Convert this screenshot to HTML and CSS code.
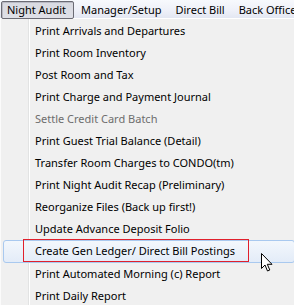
FILE: index.html
```html
<!DOCTYPE html>
<html lang="en">
<head>
    <meta charset="UTF-8">
    <title>Night Audit menu</title>
    <link rel="stylesheet" href="styles.css">
</head>
<body>
    <div class="menubar">
        <span class="menu-title open">Night Audit</span>
        <span class="menu-title">Manager/Setup</span>
        <span class="menu-title">Direct Bill</span>
        <span class="menu-title">Back Office</span>
    </div>

    <ul class="dropdown">
        <li class="item">Print Arrivals and Departures</li>
        <li class="item">Print Room Inventory</li>
        <li class="item">Post Room and Tax</li>
        <li class="item">Print Charge and Payment Journal</li>
        <li class="item disabled">Settle Credit Card Batch</li>
        <li class="item">Print Guest Trial Balance (Detail)</li>
        <li class="item">Transfer Room Charges to CONDO(tm)</li>
        <li class="item">Print Night Audit Recap (Preliminary)</li>
        <li class="item">Reorganize Files (Back up first!)</li>
        <li class="item">Update Advance Deposit Folio</li>
        <li class="item hover">
            Create Gen Ledger/ Direct Bill Postings
            <span class="callout"></span>
            <svg class="cursor" width="12" height="20" viewBox="0 0 12 20">
                <path d="M0.5 0.5 L0.5 15.5 L4 12 L6.5 18 L8.8 17 L6.3 11.3 L11 11.3 Z" fill="#fff" stroke="#000" stroke-width="1"/>
            </svg>
        </li>
        <li class="item">Print Automated Morning (c) Report</li>
        <li class="item">Print Daily Report</li>
    </ul>
</body>
</html>
```

FILE: styles.css
```css
html, body {
    margin: 0;
    padding: 0;
    overflow: hidden;
}
body {
    width: 294px;
    height: 305px;
    font-family: "Noto Sans", "Open Sans", sans-serif;
    font-size: 11px;
    color: #000;
    background: #f0f0f0;
}

.menubar {
    display: flex;
    height: 18px;
    padding-left: 1px;
    background: linear-gradient(to bottom, #f7f9fd 0%, #eef0f8 60%, #e3e7f2 100%);
}
.menu-title {
    height: 16px;
    line-height: 15px;
    margin-top: 1px;
    padding: 0 6px 0 6px;
    border: 1px solid transparent;
    border-radius: 2px;
    white-space: nowrap;
}
.menu-title.open {
    padding-left: 5px;
    padding-right: 7px;
    border-color: #6b6b74;
    background: linear-gradient(to bottom, #d8d9e0, #dfe0e7);
    box-shadow: inset 1px 1px 0 #b9bac4;
}

.dropdown {
    list-style: none;
    margin: 0;
    padding: 1px 0 0 0;
    width: 296px;
    border-top: 1px solid #fff;
    background:
        linear-gradient(to right, transparent 28px, #e2e3e3 28px, #e2e3e3 29px, #fff 29px, #fff 30px, transparent 30px),
        #f0f0f0;
    box-shadow: inset 1px 0 0 #fbfbfb;
}
.item {
    position: relative;
    height: 22px;
    line-height: 22px;
    padding-left: 35px;
    white-space: nowrap;
}
.item.disabled {
    color: #6d6d6d;
}
.item.hover {
    margin: 0 1px 0 3px;
    padding-left: 31px;
    height: 21px;
    line-height: 20px;
    border: 1px solid #a9c9ef;
    border-radius: 3px;
    background: linear-gradient(to bottom, #f3f7fc, #e3ecf8);
}
.callout {
    position: absolute;
    left: 19px;
    top: -2px;
    width: 224px;
    height: 21px;
    border: 1px solid #e0202c;
}
.cursor {
    position: absolute;
    left: 257px;
    top: 12px;
}
```
